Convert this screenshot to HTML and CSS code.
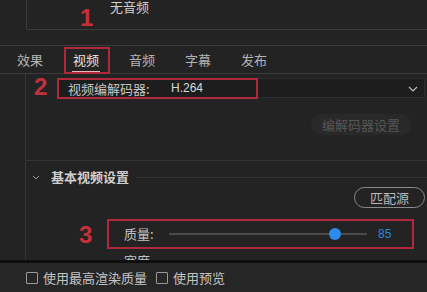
FILE: index.html
```html
<!DOCTYPE html>
<html>
<head>
<meta charset="utf-8">
<link rel="stylesheet" href="styles.css">
</head>
<body>
<div class="app">
  <div class="top-panel"><span class="top-text">无音频</span></div>
  <div class="gap-strip"></div>
  <div class="tabs">
    <span class="tab">效果</span>
    <span class="tab active">视频</span>
    <span class="tab">音频</span>
    <span class="tab">字幕</span>
    <span class="tab">发布</span>
  </div>
  <div class="content">
    <div class="codec-row">
      <div class="select">
        <span class="select-label">视频编解码器:</span>
        <span class="select-value">H.264</span>
        <svg class="chev" width="10" height="6" viewBox="0 0 10 6"><path d="M1 1 L5 5 L9 1" fill="none" stroke="#bbb" stroke-width="1.2"/></svg>
      </div>
    </div>
    <div class="btn-row">
      <span class="pill disabled">编解码器设置</span>
    </div>
    <div class="section-head">
      <svg class="sec-chev" width="8" height="5" viewBox="0 0 8 5"><path d="M1 1 L4 4 L7 1" fill="none" stroke="#999" stroke-width="1"/></svg>
      <span class="sec-title">基本视频设置</span>
      <span class="sec-line"></span>
    </div>
    <div class="match-row">
      <span class="pill outline">匹配源</span>
    </div>
    <div class="quality-row">
      <span class="q-label">质量:</span>
      <div class="slider"><div class="track"></div><div class="thumb"></div></div>
      <span class="q-value">85</span>
    </div>
    <div class="width-row"><span class="q-label">宽度</span></div>
  </div>
  <div class="bottom-bar">
    <label class="check"><span class="box"></span>使用最高渲染质量</label>
    <label class="check"><span class="box"></span>使用预览</label>
  </div>

  <span class="mark n1">1</span>
  <span class="mark n2">2</span>
  <span class="mark n3">3</span>
  <span class="rbox r1"></span>
  <span class="rbox r2"></span>
  <span class="rbox r3"></span>
</div>
</body>
</html>
```

FILE: styles.css
```css
* { box-sizing: border-box; }
html, body { margin: 0; padding: 0; }
body {
  background: #232323;
  font-family: "Noto Sans CJK SC", "Noto Sans", sans-serif;
  color: #c4c4c4;
  font-size: 13px;
}
.app {
  position: relative;
  width: 427px;
  height: 292px;
  overflow: hidden;
  display: flex;
  flex-direction: column;
}
.app > * { flex-shrink: 0; }
.top-panel {
  margin-left: 26px;
  height: 30px;
  border-left: 1px solid #3a3a3a;
  border-bottom: 1px solid #3a3a3a;
  position: relative;
  overflow: hidden;
}
.top-text {
  display: block;
  margin-left: 83px;
  margin-top: -2px;
  line-height: 18px;
  font-size: 13px;
  color: #d0d0d0;
}
.gap-strip { height: 15px; }
.tabs {
  height: 29px;
  border-top: 1px solid #3a3a3a;
  border-bottom: 1px solid #3a3a3a;
  display: flex;
  align-items: center;
  padding-left: 17px;
  gap: 30px;
}
.tab {
  font-size: 13px;
  color: #b4b4b4;
  position: relative;
  line-height: 18px;
}
.tab.active { color: #e4e4e4; }
.tab.active::after {
  content: "";
  position: absolute;
  left: -1px;
  right: -1px;
  top: 20px;
  height: 2px;
  background: #e6b9bd;
}
.content {
  margin-left: 25px;
  border-left: 1px solid #363636;
  flex: 1 1 auto;
  min-height: 0;
  overflow: hidden;
  display: flex;
  flex-direction: column;
  position: relative;
}
.content > * { flex-shrink: 0; }
.codec-row {
  padding: 4px 2px 0 31px;
}
.select {
  height: 20px;
  background: #1d1d1d;
  border: 1px solid #2e2e2e;
  display: flex;
  align-items: center;
  padding-left: 10px;
  padding-right: 6px;
}
.select-label { color: #c8c8c8; font-size: 13px; width: 103px; }
.select-value { color: #d8d8d8; font-size: 12px; font-family: "Liberation Sans", sans-serif; flex: 1; }
.chev { margin-top: 1px; }
.btn-row {
  display: flex;
  justify-content: flex-end;
  padding: 16px 16px 0 0;
  height: 63px;
  border-bottom: 1px solid #363636;
}
.pill {
  display: inline-flex;
  align-items: center;
  justify-content: center;
  border-radius: 11px;
  font-size: 13px;
}
.pill.disabled {
  width: 100px;
  height: 21px;
  background: #292929;
  color: #575757;
}
.section-head {
  height: 22px;
  display: flex;
  align-items: center;
  padding-left: 6px;
  margin-top: 4px;
}
.sec-chev { margin-right: 11px; margin-top: 2px; }
.sec-title {
  font-weight: bold;
  color: #d0d0d0;
  font-size: 13px;
}
.sec-line {
  flex: 1;
  height: 1px;
  background: #333333;
  margin-left: 8px;
  margin-top: 2px;
}
.match-row {
  display: flex;
  justify-content: flex-end;
  padding-right: 2px;
}
.pill.outline {
  width: 71px;
  height: 21px;
  border: 1px solid #8a8a8a;
  color: #b8b8b8;
}
.quality-row {
  margin-top: 11px;
  margin-left: 82px;
  margin-right: 14px;
  height: 29px;
  display: flex;
  align-items: center;
  padding-left: 16px;
}
.q-label { color: #c4c4c4; font-size: 13px; width: 45px; }
.slider {
  position: relative;
  width: 198px;
  height: 12px;
}
.track {
  position: absolute;
  left: 0; right: 0; top: 5px;
  height: 2px;
  background: #4a4a4a;
}
.thumb {
  position: absolute;
  left: 160px;
  top: 0;
  width: 12px;
  height: 12px;
  border-radius: 50%;
  background: #2d8ceb;
}
.q-value {
  color: #2d86e0;
  font-size: 12px;
  font-family: "Liberation Sans", sans-serif;
  margin-left: 11px;
}
.width-row {
  margin-left: 98px;
  margin-top: 3px;
  height: 16px;
}
.bottom-bar {
  height: 32px;
  border-top: 3px solid #0e0e0e;
  background: #262626;
  display: flex;
  align-items: center;
  padding-left: 26px;
  gap: 9px;
}
.check {
  display: flex;
  align-items: center;
  color: #c4c4c4;
  font-size: 13px;
}
.box {
  width: 12px;
  height: 12px;
  border: 1px solid #9a9a9a;
  border-radius: 1px;
  margin-right: 5px;
}
.mark {
  position: absolute;
  color: #c3303c;
  font-family: "Liberation Sans", sans-serif;
  font-weight: bold;
  font-size: 24px;
  line-height: 24px;
}
.n1 { left: 80px; top: 6px; }
.n2 { left: 34px; top: 75px; }
.n3 { left: 79px; top: 223px; }
.rbox {
  position: absolute;
  border: 2px solid #b0283a;
}
.r1 { left: 64px; top: 47px; width: 46px; height: 27px; }
.r2 { left: 57px; top: 78px; width: 201px; height: 21px; }
.r3 { left: 107px; top: 219px; width: 307px; height: 30px; }
```
